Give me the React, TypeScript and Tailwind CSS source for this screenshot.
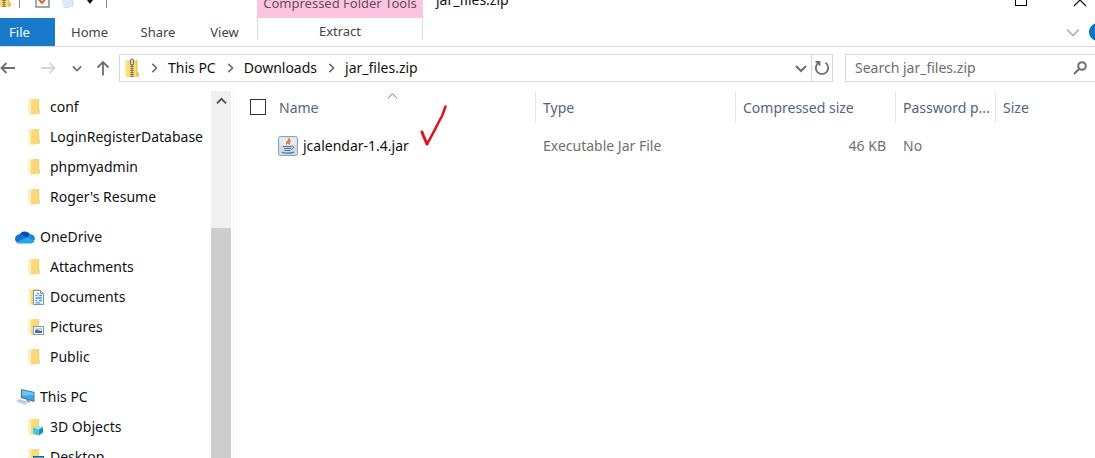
import type { ReactNode } from "react";

type Overlay = "doc" | "pic" | "cube" | "screen";
type Tone = "nav" | "pale";

function FolderIcon({ overlay, tone = "nav" }: { overlay?: Overlay; tone?: Tone }) {
  const back = tone === "pale" ? "#c9d8ef" : "#fdeab0";
  const front = tone === "pale" ? "#dfe8f6" : "#f9d978";
  return (
    <svg viewBox="0 0 18 18" className="h-[18px] w-[18px] shrink-0" aria-hidden="true">
      <path d="M.3 1h7.500v15.500l-5 .5-2.500-2z" fill={back} />
      <path d="M2.800 3.500 5.300 1h5.500v11l1 1v3H3.300l-.5 1z" fill={front} />
      <path d="M.3 1v14l2.500 2V3z" fill={tone === "pale" ? "#e6edf8" : "#fff0c4"} />
      <path d="M10.300 1.500v11l1.500 1v-1.500l-.7-.7V1.500z" fill={tone === "pale" ? "#c3d3ea" : "#eec85c"} />
      {overlay === "doc" && (
        <g>
          <path d="M5.500 2.500h7l3 3v11h-10z" fill="#fff" stroke="#8493a3" />
          <path d="M12.500 2.500v3h3" fill="none" stroke="#8493a3" />
          <path d="M9 5.500h2M7.500 7.500h2M11 7.500h3M7.500 10h6.500M7.500 12.500h2M11 12.500h3M7.500 14.800h5" stroke="#3f97d8" strokeWidth="1.300" />
        </g>
      )}
      {overlay === "pic" && (
        <g>
          <rect x="5.500" y="8.500" width="10" height="8" fill="#fff" stroke="#8d98a4" />
          <rect x="7" y="10" width="7" height="5" fill="#b5d8f2" />
          <path d="M7 12.500 9 11.500l3 1.500 2-.5V15H7z" fill="#3b6ea5" />
        </g>
      )}
      {overlay === "cube" && (
        <g>
          <path d="M5 9.500 10 7.500l5 1.500-4 2.500z" fill="#9fe6ef" />
          <path d="m5 9.500 6 2v6L5.500 16z" fill="#45c4d8" />
          <path d="m11 11.500 4-2.500v5.500l-4 3z" fill="#1795b0" />
        </g>
      )}
      {overlay === "screen" && (
        <g>
          <rect x="5.500" y="8.500" width="10" height="8" fill="#2794e8" stroke="#1c5d97" />
          <path d="M6 9h9v3l-9 2z" fill="#46adf4" />
        </g>
      )}
    </svg>
  );
}

function ZipIcon() {
  return (
    <svg viewBox="0 0 16 20" className="h-5 w-4 shrink-0" aria-hidden="true">
      <path d="M1 2h12v13l2 1v3H1z" fill="#f9dc74" />
      <path d="M1 2h2v17H1z" fill="#fdeaa5" />
      <path d="M12 2.500h1.500V14l1.500 1v3.500h-3z" fill="#ecc74e" />
      <path d="M8 6v13" stroke="#5a5a55" strokeWidth="3" strokeDasharray="1 1" />
      <path d="M8 6v13" stroke="#8f8a70" />
      <rect x="6.500" y="1" width="3" height="6" rx="1.500" fill="#d8dadd" stroke="#5f6368" />
    </svg>
  );
}

function Cloud() {
  return (
    <svg viewBox="0 0 20 14" className="h-[14px] w-5 shrink-0" aria-hidden="true">
      <path d="M4 6a6.200 6.200 0 0 1 11-2l-2 5-9 1z" fill="#0a4fa6" />
      <path d="M4.500 4.300C1.800 4.400 0 6.400 0 8.800 0 11.500 2 13.500 4.500 13.500l8-5.500-4-2.600a6 6 0 0 0-4-1.100z" fill="#1272ce" />
      <path d="M12 7.800 14.800 4c3 .3 5.200 2.200 5.200 5.200l-2 2z" fill="#1b8be0" />
      <path d="M1.500 12.300 12 7.300l7.500 3.700c-.5 1.500-2 2.500-3.700 2.500H4.500a4.300 4.300 0 0 1-3-1.200z" fill="#2ba3ee" />
    </svg>
  );
}

function Computer() {
  return (
    <svg viewBox="0 0 20 18" className="h-[18px] w-5 shrink-0" aria-hidden="true">
      <path d="m6 1 13.500 3v10L6 10z" fill="#4b6a83" />
      <path d="m7 2.200 11.700 2.600v8L7 9.300z" fill="#3ca8f0" />
      <path d="m7 2.200 11.700 2.600v2.200L7 7.500z" fill="#6cc4f8" />
      <path d="m11 11.500 4 1.200v1.800l-3-.5z" fill="#8b98a3" />
      <path d="m1 13 3-2 9 2.800L10.500 17z" fill="#d5dce2" />
      <path d="m2 13.200 8.500 2.800M4 12l8 2.500" stroke="#a3adb6" strokeWidth=".6" />
    </svg>
  );
}

function JavaFile() {
  return (
    <svg viewBox="0 0 20 20" className="h-5 w-5 shrink-0" aria-hidden="true">
      <rect x=".5" y=".5" width="19" height="19" rx="2" fill="#cbdbe8" stroke="#8ea3b5" />
      <rect x="1.500" y="1.500" width="17" height="8" rx="1" fill="#e4edf5" />
      <path d="M10.500 2.500c2.500 2-3.300 3-1.300 5.800M12.700 4.500c-2.500 1.200-2.300 2-1 3.900" fill="none" stroke="#e8762c" strokeWidth="1.700" />
      <path d="M5 10.500h8.500M6 12.500h7M6.500 14.500h6" stroke="#50718f" strokeWidth="1.100" />
      <path d="M13.500 10c3-.5 2.300 2.800-.5 3.300" fill="none" stroke="#50718f" />
      <path d="M4 16.200c2 1.300 9.500 1.300 12-.2" fill="none" stroke="#50718f" strokeWidth="1.200" />
    </svg>
  );
}

function Chevron({ dir, className }: { dir: "up" | "down" | "right"; className: string }) {
  const d = dir === "up" ? "m1 8 5-5 5 5" : dir === "down" ? "m1 4 5 5 5-5" : "m4 1 5 5-5 5";
  return (
    <svg viewBox="0 0 12 12" className={className} fill="none" stroke="currentColor" aria-hidden="true">
      <path d={d} />
    </svg>
  );
}

function Arrow({ dir }: { dir: "left" | "right" | "up" }) {
  const d =
    dir === "left" ? "M15 8H1.500M6.500 3 1.500 8l5 5" : dir === "right" ? "M1 8h13.500M9.500 3l5 5-5 5" : "M8 15.500V2M2.500 7.500 8 2l5.500 5.500";
  return (
    <svg viewBox="0 0 16 16" className="h-4 w-4" fill="none" stroke="currentColor" strokeWidth="1.800" aria-hidden="true">
      <path d={d} />
    </svg>
  );
}

function NavItem({ icon, label, root }: { icon: ReactNode; label: string; root?: boolean }) {
  return (
    <li className={root ? "mt-[10px]" : ""}>
      <a href="#" className={`flex h-[30px] items-center whitespace-nowrap ${root ? "gap-[5px] pl-[15px]" : "gap-1 pl-7"}`}>
        {icon}
        {label}
      </a>
    </li>
  );
}

const crumbs = ["This PC", "Downloads", "jar_files.zip"];

function TitleBar() {
  return (
    <header className="flex h-[18px] shrink-0 items-end overflow-hidden">
      <div className="flex h-9 w-[257px] shrink-0 items-center">
        <div className="-ml-1 w-6 shrink-0"><span className="flex h-4 items-end"><ZipIcon /></span></div>
        <span className="-ml-px h-4 w-px bg-[#8a8a8a]" />
        <button aria-label="Properties" className="ml-[15px]">
          <svg viewBox="0 0 15 16" className="h-4 w-[15px]" aria-hidden="true">
            <rect x="1" y="1" width="13" height="14" fill="#fafbfd" stroke="#68788c" strokeWidth="1.300" />
            <path d="m4 7.500 3 3.500 5-6" fill="none" stroke="#e2602c" strokeWidth="2" />
          </svg>
        </button>
        <button aria-label="New folder" className="ml-3"><FolderIcon tone="pale" /></button>
        <button aria-label="Customize toolbar" className="ml-[6px] pt-1">
          <svg viewBox="0 0 8 4" className="h-1 w-2" aria-hidden="true"><path d="M1 0h6L4 4z" fill="#111" /></svg>
        </button>
        <span className="ml-3 h-4 w-px bg-[#8a8a8a]" />
      </div>
      <div className="flex h-9 w-[166px] shrink-0 items-center justify-center whitespace-nowrap bg-[#fdc4e0] pt-[6px] text-[13px] text-[#6b4a60]">
        Compressed Folder Tools
      </div>
      <h1 className="flex h-9 items-center pl-[13px] text-sm">jar_files.zip</h1>
      <div className="ml-auto flex h-9 items-center">
        <button aria-label="Maximize" className="mr-[46px] h-3 w-3 border border-black" />
        <button aria-label="Close" className="mr-2">
          <svg viewBox="0 0 14 14" className="h-[14px] w-[14px]" stroke="#111" strokeWidth="1.200" aria-hidden="true">
            <path d="m1 1 12 12M13 1 1 13" />
          </svg>
        </button>
      </div>
    </header>
  );
}

function Ribbon() {
  return (
    <nav className="flex h-[29px] shrink-0 overflow-hidden border-b border-[#dadbdc] text-[13px] text-[#444]">
      <button className="w-[55px] bg-[#1979ca] pr-4 text-white">File</button>
      <button className="w-[69px]">Home</button>
      <button className="w-[68px]">Share</button>
      <button className="w-[65px]">View</button>
      <button className="mb-[6px] w-[166px] border-x border-[#dcdcdc] pt-1">Extract</button>
      <button aria-label="Expand ribbon" className="ml-auto text-[#b4b4b4]">
        <Chevron dir="down" className="h-[14px] w-[14px] stroke-[1.500]" />
      </button>
      <button aria-label="Help" className="-mr-3 ml-[9px] h-[18px] w-[18px] shrink-0 self-center rounded-full border border-[#0a5ea8] bg-[#0078d7]" />
    </nav>
  );
}

function AddressBar() {
  return (
    <div className="flex shrink-0 items-center pt-[7px] text-[#6e6e6e]">
      <button aria-label="Back"><Arrow dir="left" /></button>
      <button aria-label="Forward" className="ml-6 text-[#d6d6d6]"><Arrow dir="right" /></button>
      <button aria-label="Recent locations" className="ml-4"><Chevron dir="down" className="h-[10px] w-[10px] stroke-2" /></button>
      <button aria-label="Up" className="ml-[13px]"><Arrow dir="up" /></button>
      <div className="ml-2 flex h-7 min-w-0 flex-1 items-center border border-[#d9d9d9] pl-1">
        <ZipIcon />
        <ol className="flex min-w-0 flex-1 items-center overflow-hidden">
          {crumbs.map((c) => (
            <li key={c} className="flex items-center whitespace-nowrap">
              <Chevron dir="right" className="mx-[9px] h-[10px] w-[10px] stroke-2" />
              <a href="#" className="leading-6 text-[#111]">{c}</a>
            </li>
          ))}
        </ol>
        <button aria-label="Previous locations" className="mr-1"><Chevron dir="down" className="h-3 w-3 stroke-2" /></button>
        <button aria-label="Refresh" className="flex h-full w-[21px] items-center justify-center border-l border-[#d9d9d9]">
          <svg viewBox="0 0 16 16" className="h-4 w-4" fill="none" stroke="currentColor" strokeWidth="1.800" aria-hidden="true">
            <path d="M11.500 2.800a6.200 6.200 0 1 1-7 0M1.500 1.800h4v4" />
          </svg>
        </button>
      </div>
      <label className="ml-3 flex h-7 w-[250px] items-center border border-r-0 border-[#d9d9d9] pl-[9px] pr-2">
        <input type="search" aria-label="Search jar_files.zip" placeholder="Search jar_files.zip" className="min-w-0 flex-1 text-sm outline-none placeholder:text-[#6e6e6e]" />
        <svg viewBox="0 0 14 14" className="h-[14px] w-[14px]" fill="none" stroke="currentColor" strokeWidth="2" aria-hidden="true">
          <circle cx="9" cy="5" r="3.800" />
          <path d="M6.200 7.800 1 13" />
        </svg>
      </label>
    </div>
  );
}

function Sidebar() {
  return (
    <aside className="flex w-[234px] shrink-0 border-r border-[#f3f3f3] pr-[2px]">
      <ul className="min-w-0 flex-1 overflow-hidden pt-px">
        <NavItem icon={<FolderIcon />} label="conf" />
        <NavItem icon={<FolderIcon />} label="LoginRegisterDatabase" />
        <NavItem icon={<FolderIcon />} label="phpmyadmin" />
        <NavItem icon={<FolderIcon />} label="Roger's Resume" />
        <NavItem icon={<Cloud />} label="OneDrive" root />
        <NavItem icon={<FolderIcon />} label="Attachments" />
        <NavItem icon={<FolderIcon overlay="doc" />} label="Documents" />
        <NavItem icon={<FolderIcon overlay="pic" />} label="Pictures" />
        <NavItem icon={<FolderIcon />} label="Public" />
        <NavItem icon={<Computer />} label="This PC" root />
        <NavItem icon={<FolderIcon overlay="cube" />} label="3D Objects" />
        <NavItem icon={<FolderIcon overlay="screen" />} label="Desktop" />
      </ul>
      <div className="flex w-5 shrink-0 flex-col bg-[#f0f0f0]">
        <button aria-label="Scroll up" className="flex h-5 items-center justify-center text-[#505050]">
          <Chevron dir="up" className="h-[11px] w-[11px] stroke-2" />
        </button>
        <div className="mt-[117px] flex-1 bg-[#cdcdcd]" />
      </div>
    </aside>
  );
}

function FileList() {
  const head = "border-r border-[#e5e5e5] p-0 pl-[7px] pt-[2px] text-left font-normal";
  return (
    <main className="relative min-w-0 flex-1">
      <table className="w-full table-fixed border-separate border-spacing-0 whitespace-nowrap">
        <colgroup>
          <col className="w-[44px]" />
          <col className="w-[258px]" />
          <col className="w-[200px]" />
          <col className="w-[160px]" />
          <col className="w-[100px]" />
          <col />
        </colgroup>
        <thead>
          <tr className="h-8 text-[#54657b]">
            <th className="p-0 pl-4 text-left">
              <input type="checkbox" aria-label="Select all" className="block h-4 w-4 appearance-none border border-[#333] bg-white" />
            </th>
            <th className="relative border-r border-[#e5e5e5] p-0 pl-px pt-[2px] text-left font-normal" aria-sort="ascending">
              Name
              <Chevron dir="up" className="absolute left-[109px] top-0 h-[11px] w-[11px] text-[#666]" />
            </th>
            <th className={head}>Type</th>
            <th className={head}>Compressed size</th>
            <th className={head}>Password p...</th>
            <th className="p-0 pl-[7px] pt-[2px] text-left font-normal">Size</th>
          </tr>
        </thead>
        <tbody>
          <tr className="h-[38px] text-[#707070]">
            <td className="p-0" />
            <td className="p-0 pt-2">
              <a href="#" className="flex items-center gap-[5px] text-[#111]"><JavaFile />jcalendar-1.4.jar</a>
            </td>
            <td className="p-0 pl-[7px] pt-2">Executable Jar File</td>
            <td className="p-0 pr-[10px] pt-2 text-right">46 KB</td>
            <td className="p-0 pl-[7px] pt-2">No</td>
            <td className="p-0" />
          </tr>
        </tbody>
      </table>
      <svg viewBox="0 0 28 44" className="absolute left-[185px] top-[12px] h-[44px] w-[28px]" fill="none" stroke="#e0101c" strokeLinecap="round" strokeLinejoin="round" aria-hidden="true">
        <path d="m3 29 1.500 4L8 41" strokeWidth="3" />
        <path d="M8 41c5-8 10-19 15-28l3.500-9.500" strokeWidth="2.500" />
      </svg>
    </main>
  );
}

export default function App() {
  return (
    <div className="flex h-screen flex-col overflow-hidden bg-white font-['Noto_Sans','Open_Sans',sans-serif] text-sm text-[#111]">
      <TitleBar />
      <Ribbon />
      <AddressBar />
      <div className="mt-[9px] flex min-h-0 flex-1">
        <Sidebar />
        <FileList />
      </div>
    </div>
  );
}
